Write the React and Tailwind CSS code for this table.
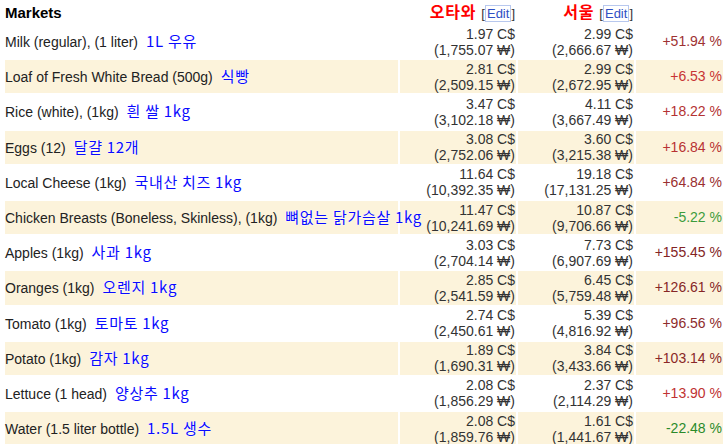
import React from "react";

const rows = [
  { name: "Milk (regular), (1 liter)", ko: "1L 우유", a: "1.97", aw: "1,755.07", b: "2.99", bw: "2,666.67", pct: "+51.94 %", color: "text-[#9e3232]" },
  { name: "Loaf of Fresh White Bread (500g)", ko: "식빵", a: "2.81", aw: "2,509.15", b: "2.99", bw: "2,672.95", pct: "+6.53 %", color: "text-[#c83434]" },
  { name: "Rice (white), (1kg)", ko: "흰 쌀 1kg", a: "3.47", aw: "3,102.18", b: "4.11", bw: "3,667.49", pct: "+18.22 %", color: "text-[#b43232]" },
  { name: "Eggs (12)", ko: "달걀 12개", a: "3.08", aw: "2,752.06", b: "3.60", bw: "3,215.38", pct: "+16.84 %", color: "text-[#b83232]" },
  { name: "Local Cheese (1kg)", ko: "국내산 치즈 1kg", a: "11.64", aw: "10,392.35", b: "19.18", bw: "17,131.25", pct: "+64.84 %", color: "text-[#9a3030]" },
  { name: "Chicken Breasts (Boneless, Skinless), (1kg)", ko: "뼈없는 닭가슴살 1kg", a: "11.47", aw: "10,241.69", b: "10.87", bw: "9,706.66", pct: "-5.22 %", color: "text-[#3c9c3c]" },
  { name: "Apples (1kg)", ko: "사과 1kg", a: "3.03", aw: "2,704.14", b: "7.73", bw: "6,907.69", pct: "+155.45 %", color: "text-[#822424]" },
  { name: "Oranges (1kg)", ko: "오렌지 1kg", a: "2.85", aw: "2,541.59", b: "6.45", bw: "5,759.48", pct: "+126.61 %", color: "text-[#862626]" },
  { name: "Tomato (1kg)", ko: "토마토 1kg", a: "2.74", aw: "2,450.61", b: "5.39", bw: "4,816.92", pct: "+96.56 %", color: "text-[#8e2c2c]" },
  { name: "Potato (1kg)", ko: "감자 1kg", a: "1.89", aw: "1,690.31", b: "3.84", bw: "3,433.66", pct: "+103.14 %", color: "text-[#8a2828]" },
  { name: "Lettuce (1 head)", ko: "양상추 1kg", a: "2.08", aw: "1,856.29", b: "2.37", bw: "2,114.29", pct: "+13.90 %", color: "text-[#c03232]" },
  { name: "Water (1.5 liter bottle)", ko: "1.5L 생수", a: "2.08", aw: "1,859.76", b: "1.61", bw: "1,441.67", pct: "-22.48 %", color: "text-[#2a8a2a]" },
];

const EditLink = () => (
  <span className="ml-[5px] text-[13px] font-normal text-[#333]">
    [<span className="border border-[#b8c8ee] px-[1px] text-[#2f4fc4]">Edit</span>]
  </span>
);

export default function App() {
  return (
    <div className="bg-white w-[728px] h-[444px] overflow-hidden font-['Liberation_Sans',Arial,sans-serif] text-[14px] text-[#222]">
      <table className="table-fixed border-separate border-spacing-[2px] ml-[3px] w-[722px]">
        <thead>
          <tr className="h-[19px]">
            <th className="w-[393px] text-left font-bold text-[15px] text-black leading-[19px] p-0">
              Markets
            </th>
            <th className="w-[116px] text-right p-0 pr-[1px] whitespace-nowrap leading-[19px] align-bottom">
              <span className="text-[16px] font-bold text-[#ff0000] font-['Noto_Sans_CJK_KR',sans-serif] tracking-[0.8px]">
                오타와
              </span>
              <EditLink />
            </th>
            <th className="w-[116px] text-right p-0 pr-[1px] whitespace-nowrap leading-[19px] align-bottom">
              <span className="text-[16px] font-bold text-[#ff0000] font-['Noto_Sans_CJK_KR',sans-serif] tracking-[0.8px]">
                서울
              </span>
              <EditLink />
            </th>
            <th className="w-[87px] p-0 leading-[19px]" />
          </tr>
        </thead>
        <tbody>
          {rows.map((r, i) => {
            const bg = i % 2 === 1 ? "bg-[#fcf3db]" : "bg-white";
            return (
              <tr key={r.name} className="h-[33.2px]">
                <td className={`${bg} p-0 whitespace-nowrap align-middle leading-[18px]`}>
                  {r.name}
                  <span className="ml-2 text-[15px] text-[#0a0aff] tracking-[0.7px] font-['Noto_Sans_CJK_KR',sans-serif] [text-shadow:0_0_2px_#fff,0_0_1px_#fff]">
                    {r.ko}
                  </span>
                </td>
                <td className={`${bg} p-0 pr-[1px] text-right leading-[16px] text-[#333] whitespace-nowrap`}>
                  <div>{r.a} C$</div>
                  <div>({r.aw} ₩)</div>
                </td>
                <td className={`${bg} p-0 pr-[1px] text-right leading-[16px] text-[#333] whitespace-nowrap`}>
                  <div>{r.b} C$</div>
                  <div>({r.bw} ₩)</div>
                </td>
                <td className={`${bg} p-0 pr-[1px] text-right align-middle whitespace-nowrap ${r.color}`}>
                  {r.pct}
                </td>
              </tr>
            );
          })}
        </tbody>
      </table>
    </div>
  );
}
